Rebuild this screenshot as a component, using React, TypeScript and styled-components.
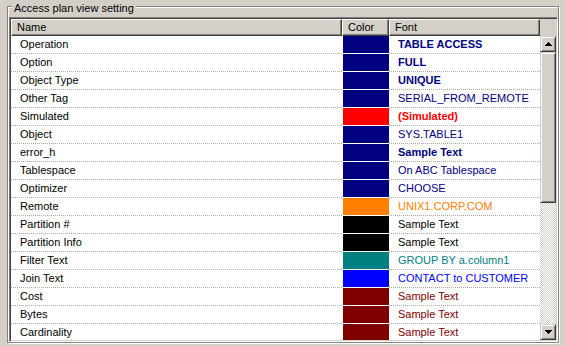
import React from "react";
import styled, { createGlobalStyle } from "styled-components";

const GlobalStyle = createGlobalStyle`
  html, body {
    margin: 0;
    padding: 0;
    background: #d4d0c8;
  }
  body {
    font-family: "Liberation Sans", Arial, sans-serif;
    font-size: 11px;
    color: #000;
  }
`;

const Page = styled.div`
  width: 565px;
  height: 346px;
  box-sizing: border-box;
  padding: 6px 0 0 7px;
  background: #d4d0c8;
  overflow: hidden;
`;

// etched group box
const Group = styled.div`
  position: relative;
  width: 552px;
  height: 337px;
  box-sizing: border-box;
  border: 1px solid #808080;
  box-shadow: inset 1px 1px 0 #fff, 1px 1px 0 #fff;
  padding: 10px 0 0 1px;
`;

const Caption = styled.span`
  position: absolute;
  top: -5px;
  left: 4px;
  padding: 0 2px;
  background: #d4d0c8;
  line-height: 13px;
  white-space: nowrap;
`;

// sunken list frame
const Frame = styled.div`
  width: 549px;
  height: 325px;
  box-sizing: border-box;
  padding: 1px;
  border-style: solid;
  border-width: 1px;
  border-color: #808080 #fff #fff #808080;
  box-shadow: inset 1px 1px 0 #404040, inset -1px -1px 0 #d4d0c8;
  display: flex;
  background: #fff;
`;

const Table = styled.div`
  width: 529px;
  display: flex;
  flex-direction: column;
`;

const HeaderRow = styled.div`
  display: flex;
  height: 17px;
  flex: none;
`;

const HeaderCell = styled.div<{ $w: number }>`
  width: ${(p) => p.$w}px;
  box-sizing: border-box;
  background: #d4d0c8;
  border-style: solid;
  border-width: 1px;
  border-color: #fff #404040 #404040 #fff;
  box-shadow: inset -1px -1px 0 #808080;
  padding-left: 5px;
  line-height: 15px;
  white-space: nowrap;
`;

const Body = styled.div`
  flex: 1;
  overflow: hidden;
  background: #fff;
`;

const Row = styled.div`
  display: flex;
  height: 18px;
`;

const NameCell = styled.div`
  width: 331px;
  box-sizing: border-box;
  padding-left: 9px;
  line-height: 17px;
  border-bottom: 1px dotted #a8a8a8;
  white-space: nowrap;
`;

const SwatchCell = styled.div`
  width: 47px;
  box-sizing: border-box;
  padding: 0 0 1px 1px;
`;

const Swatch = styled.div<{ $c: string }>`
  height: 17px;
  background: ${(p) => p.$c};
`;

const FontCell = styled.div<{ $c: string; $bold?: boolean }>`
  width: 151px;
  box-sizing: border-box;
  padding-left: 9px;
  line-height: 17px;
  border-bottom: 1px dotted #a8a8a8;
  color: ${(p) => p.$c};
  font-weight: ${(p) => (p.$bold ? 700 : 400)};
  white-space: nowrap;
`;

const ScrollColumn = styled.div`
  width: 16px;
  display: flex;
  flex-direction: column;
`;

const Corner = styled.div`
  height: 17px;
  flex: none;
  background: #d4d0c8;
`;

const ScrollButton = styled.div`
  height: 16px;
  flex: none;
  box-sizing: border-box;
  background: #d4d0c8;
  border-style: solid;
  border-width: 1px;
  border-color: #d4d0c8 #404040 #404040 #d4d0c8;
  box-shadow: inset 1px 1px 0 #fff, inset -1px -1px 0 #808080;
  display: flex;
  align-items: center;
  justify-content: center;
`;

const Thumb = styled(ScrollButton)`
  height: 151px;
`;

const Track = styled.div`
  flex: 1;
  background-image: conic-gradient(#fff 25%, #d4d0c8 0 50%, #fff 0 75%, #d4d0c8 0);
  background-size: 2px 2px;
`;

const Arrow = ({ down }: { down?: boolean }) => (
  <svg width="7" height="4" viewBox="0 0 7 4" style={{ display: "block" }}>
    {down ? (
      <path d="M0 0h7L3.5 4z" fill="#000" shapeRendering="crispEdges" />
    ) : (
      <path d="M3.5 0L7 4H0z" fill="#000" shapeRendering="crispEdges" />
    )}
  </svg>
);

interface ISetting {
  name: string;
  swatch: string;
  text: string;
  bold?: boolean;
}

const NAVY = "#000080";

const settings: ISetting[] = [
  { name: "Operation", swatch: NAVY, text: "TABLE ACCESS", bold: true },
  { name: "Option", swatch: NAVY, text: "FULL", bold: true },
  { name: "Object Type", swatch: NAVY, text: "UNIQUE", bold: true },
  { name: "Other Tag", swatch: NAVY, text: "SERIAL_FROM_REMOTE" },
  { name: "Simulated", swatch: "#ff0000", text: "(Simulated)", bold: true },
  { name: "Object", swatch: NAVY, text: "SYS.TABLE1" },
  { name: "error_h", swatch: NAVY, text: "Sample Text", bold: true },
  { name: "Tablespace", swatch: NAVY, text: "On ABC Tablespace" },
  { name: "Optimizer", swatch: NAVY, text: "CHOOSE" },
  { name: "Remote", swatch: "#ff8000", text: "UNIX1.CORP.COM" },
  { name: "Partition #", swatch: "#000000", text: "Sample Text" },
  { name: "Partition Info", swatch: "#000000", text: "Sample Text" },
  { name: "Filter Text", swatch: "#008080", text: "GROUP BY a.column1" },
  { name: "Join Text", swatch: "#0000ff", text: "CONTACT to CUSTOMER" },
  { name: "Cost", swatch: "#800000", text: "Sample Text" },
  { name: "Bytes", swatch: "#800000", text: "Sample Text" },
  { name: "Cardinality", swatch: "#800000", text: "Sample Text" },
];

const App: React.FunctionComponent = () => {
  return (
    <Page>
      <GlobalStyle />
      <Group>
        <Caption>Access plan view setting</Caption>
        <Frame>
          <Table>
            <HeaderRow>
              <HeaderCell $w={331}>Name</HeaderCell>
              <HeaderCell $w={47}>Color</HeaderCell>
              <HeaderCell $w={151}>Font</HeaderCell>
            </HeaderRow>
            <Body>
              {settings.map((s) => (
                <Row key={s.name}>
                  <NameCell>{s.name}</NameCell>
                  <SwatchCell>
                    <Swatch $c={s.swatch} />
                  </SwatchCell>
                  <FontCell $c={s.swatch} $bold={s.bold}>
                    {s.text}
                  </FontCell>
                </Row>
              ))}
            </Body>
          </Table>
          <ScrollColumn>
            <Corner />
            <ScrollButton>
              <Arrow />
            </ScrollButton>
            <Thumb />
            <Track />
            <ScrollButton>
              <Arrow down />
            </ScrollButton>
          </ScrollColumn>
        </Frame>
      </Group>
    </Page>
  );
};

export default App;
